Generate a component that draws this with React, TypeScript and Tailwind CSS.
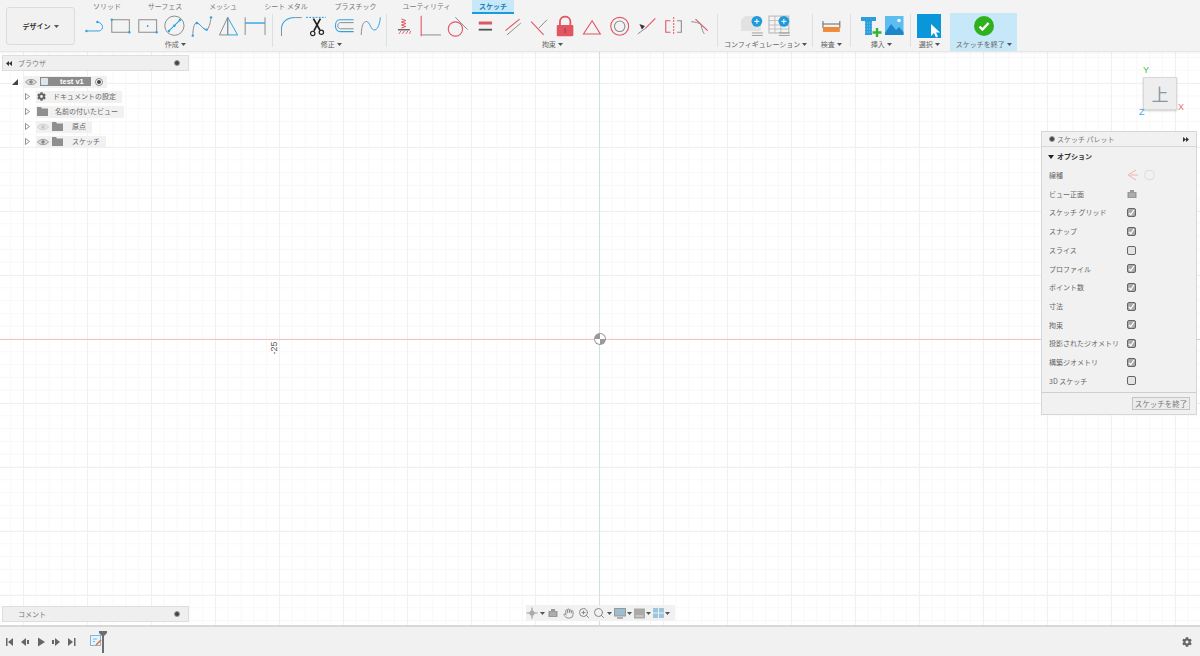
import type { ReactNode } from "react";
import { Hand, Search, ZoomIn } from "lucide-react";
import { FaCog } from "react-icons/fa";

const BLUE = "#2ea3e0";
const GRAY = "#8c8c8c";
const RED = "#e25563";

const Dot = ({ x, y }: { x: number; y: number }) => <circle cx={x} cy={y} r="1.2" fill={BLUE} />;

const createIcons: ReactNode[] = [
  <>
    <path d="M4.5 18H17.5C22 17 22 10 15.5 9" fill="none" stroke={BLUE} strokeWidth="1" />
    <Dot x={4.5} y={18} /><Dot x={15.5} y={9} />
  </>,
  <>
    <rect x="3.8" y="6.7" width="17.7" height="12.6" fill="none" stroke={GRAY} strokeWidth="1" />
    <Dot x={3.8} y={6.7} /><Dot x={21.5} y={19.3} />
  </>,
  <>
    <rect x="3.8" y="6.7" width="18" height="12.6" fill="none" stroke={GRAY} strokeWidth="1" />
    <circle cx="12.8" cy="13" r="0.9" fill={BLUE} /><Dot x={21.8} y={19.3} />
  </>,
  <>
    <circle cx="12.5" cy="12.7" r="9.7" fill="none" stroke={GRAY} strokeWidth="1" />
    <path d="M7 18L18 7" stroke={BLUE} strokeWidth="1.1" />
    <Dot x={7} y={18} /><Dot x={18} y={7} /><Dot x={12.5} y={12.7} />
  </>,
  <>
    <path d="M3.8 22.7C4 16 5 10 7.8 10C11 10 14 17 17.8 16.7C20 16 21.5 10 22.2 4.3" fill="none" stroke={GRAY} strokeWidth="1" />
    <path d="M7.8 10C11 10 14 17 17.8 16.7" fill="none" stroke={BLUE} strokeWidth="1" />
    <Dot x={3.8} y={22.7} /><Dot x={7.8} y={10} /><Dot x={17.8} y={16.7} /><Dot x={22.2} y={4.3} />
  </>,
  <>
    <path d="M12.8 4.3L4.5 22H12.8" fill="none" stroke={GRAY} strokeWidth="1" />
    <path d="M12.8 4.3L22.8 22H12.8Z" fill="none" stroke={BLUE} strokeWidth="1" />
    <path d="M12.8 4.3V22" stroke={GRAY} strokeWidth="1" />
  </>,
  <>
    <path d="M3.2 4.3V22M23.2 4.3V22" stroke={GRAY} strokeWidth="1" />
    <path d="M3.2 10H23.2" stroke={BLUE} strokeWidth="1.4" />
  </>,
];

const modifyIcons: ReactNode[] = [
  <>
    <path d="M3.5 23V16M17.5 4.5H24" stroke={GRAY} strokeWidth="1" fill="none" />
    <path d="M3.5 16C3.5 9 9 4.5 17.5 4.5" stroke={BLUE} strokeWidth="1.1" fill="none" />
  </>,
  <>
    <path d="M2 4.3H22" stroke={BLUE} strokeWidth="1" strokeDasharray="2 1.2" />
    <path d="M9.5 5.5L16 17M16.5 5.5L10 18" stroke="#222" strokeWidth="1.7" />
    <circle cx="8.8" cy="20.5" r="2.2" fill="none" stroke="#222" strokeWidth="1.2" />
    <circle cx="17.5" cy="19.3" r="2.2" fill="none" stroke="#222" strokeWidth="1.2" />
  </>,
  <>
    <path d="M22.8 6.7H9C3 6.7 3 18.7 9 18.7H22.8" fill="none" stroke={BLUE} strokeWidth="1.1" />
    <path d="M22.8 9.6H9.5C6 9.6 6 15.8 9.5 15.8H22.8" fill="none" stroke={GRAY} strokeWidth="1" />
  </>,
  <>
    <path d="M3.2 22C3.6 12 5.5 8.5 8.5 8.5" fill="none" stroke={GRAY} strokeWidth="1" />
    <path d="M8.5 8.5C12 8.5 13 18 17 17C20.5 16 22 10 22.5 4.3" fill="none" stroke={BLUE} strokeWidth="1" />
  </>,
];

const constraintIcons: ReactNode[] = [
  <>
    <path d="M9.5 6L14 7.5L9.5 9L14 10.5L9.5 12L14 13.5L9.5 15" fill="none" stroke={RED} strokeWidth="1" />
    <path d="M6 16.8H18" stroke="#555" strokeWidth="1.3" />
    <path d="M7 21L9 18M10.5 21L12.5 18M14 21L16 18M17.5 21L19 18" stroke={RED} strokeWidth="0.9" />
  </>,
  <>
    <path d="M3.2 22H23.2" stroke={GRAY} strokeWidth="1" />
    <path d="M3.2 2.7V23.3" stroke={RED} strokeWidth="1.1" />
  </>,
  <>
    <path d="M10.5 4.3L22.8 16.7" stroke={GRAY} strokeWidth="1" />
    <circle cx="10.5" cy="16" r="7.2" fill="none" stroke={RED} strokeWidth="1.1" />
  </>,
  <>
    <rect x="6.8" y="8.5" width="13.4" height="3" fill={RED} />
    <rect x="6.8" y="15.8" width="13.4" height="1.8" fill="#555" />
  </>,
  <>
    <path d="M6.5 17.7L20.8 6" stroke={RED} strokeWidth="1.1" />
    <path d="M8 22L22 10" stroke={GRAY} strokeWidth="1" />
  </>,
  <>
    <path d="M5.2 8.7L17.8 22" stroke={RED} strokeWidth="1.1" />
    <path d="M12.8 15.3L21.2 6.7" stroke={GRAY} strokeWidth="1" />
  </>,
  <>
    <path d="M8 12V8.5C8 2 18.5 2 18.5 8.5V12" fill="none" stroke={RED} strokeWidth="1.8" />
    <rect x="4.8" y="12" width="16.7" height="11.3" rx="1" fill={RED} />
    <path d="M13.2 15V20" stroke="#a83341" strokeWidth="1" />
  </>,
  <path d="M13.2 7.7L4.5 21H21.5Z" fill="none" stroke={RED} strokeWidth="1.1" />,
  <>
    <circle cx="13.8" cy="13.3" r="9" fill="none" stroke={RED} strokeWidth="1.1" />
    <circle cx="13.8" cy="13.3" r="5.3" fill="none" stroke={GRAY} strokeWidth="1.1" />
  </>,
  <>
    <path d="M22.5 5.3L12.5 15.3" stroke={RED} strokeWidth="1.1" />
    <path d="M12.5 15.3L4.8 21" stroke={GRAY} strokeWidth="1" />
    <path d="M6.5 11L12 13L9 16.5Z" fill="#333" />
  </>,
  <>
    <path d="M13.8 4V21" stroke={RED} strokeWidth="1" strokeDasharray="2 1" />
    <path d="M10.5 7.7H5.8V19.3H10.5" fill="none" stroke={RED} strokeWidth="1.1" />
    <path d="M17.2 7.7H21.5V19.3H17.2" fill="none" stroke={GRAY} strokeWidth="1.1" />
  </>,
  <>
    <path d="M9.5 6L21.8 17.7" stroke={RED} strokeWidth="1.1" />
    <path d="M5.2 8.7C10 9 15 10 15.5 13C16 16 17 19 18.5 21" fill="none" stroke={GRAY} strokeWidth="1" />
  </>,
];

const PlusBadge = ({ x }: { x: number }) => (
  <>
    <circle cx={x} cy="8.3" r="5.4" fill="#1d9bdc" />
    <path d={`M${x - 2.5} 8.3H${x + 2.5}M${x} 5.8V10.8`} stroke="#fff" strokeWidth="1" />
  </>
);

const configIcons: ReactNode[] = [
  <>
    <path d="M6 3H22V18H2V7Z" fill="#e2e2e2" />
    <path d="M13 20H24M13 22.5H24" stroke={GRAY} strokeWidth="0.8" />
    <PlusBadge x={18} />
  </>,
  <>
    <rect x="3" y="3" width="20" height="17" fill="#f4f4f4" stroke="#b5b5b5" />
    <path d="M3 7.5H23M3 12H23M3 16H23M9 3V20M15 3V20" stroke="#b5b5b5" strokeWidth="0.8" />
    <path d="M13 20H24M13 22.5H24" stroke={GRAY} strokeWidth="0.8" />
    <PlusBadge x={18} />
  </>,
];

const inspectIcons: ReactNode[] = [
  <>
    <path d="M5 8V15M22 8V15" stroke="#666" strokeWidth="1" />
    <path d="M5 11H22" stroke="#666" strokeWidth="1" />
    <rect x="5" y="14" width="17" height="5" fill="#ee8a3c" />
  </>,
];

const insertIcons: ReactNode[] = [
  <svg key="a" width="27" height="24" viewBox="0 1 27 24">
    <path d="M4 4H19V8H15V22H8V8H4Z" fill="#2b9edb" />
    <path d="M8 10H15M8 13H15M8 16H15M8 19H15" stroke="#9fd4ef" strokeWidth="0.7" strokeDasharray="1 1" />
    <path d="M20 15V24M15.5 19.5H24.5" stroke="#35b52f" strokeWidth="2.4" />
  </svg>,
  <svg key="b" width="21" height="24" viewBox="0 1 21 24">
    <rect x="1" y="3" width="18.5" height="19" fill="#5cbdf0" />
    <path d="M1 20L7 11L12 17L15 14L19.5 19V22H1Z" fill="#1b87c9" />
    <circle cx="15" cy="7.5" r="1.8" fill="#fff" />
  </svg>,
];

const RibbonIcon = ({ children }: { children: ReactNode }) => (
  <svg width="26.8" height="24" viewBox="0 1 27 24" className="shrink-0">{children}</svg>
);

const Caret = ({ className = "" }: { className?: string }) => (
  <svg width="5" height="3" viewBox="0 0 5 3" className={`inline-block align-middle ${className}`}>
    <path d="M0 0H5L2.5 3Z" fill="#555" />
  </svg>
);

const RibbonLabel = ({ text }: { text: string }) => (
  <div className="h-[12px] flex items-center justify-center gap-[2px] text-[7px] leading-[12px] text-[#666] whitespace-nowrap">
    {text}<Caret />
  </div>
);

const Group = ({ label, icons, className }: { label: string; icons: ReactNode[]; className: string }) => (
  <div className={`flex flex-col items-center ${className}`}>
    <div className="flex h-[24px]">
      {icons.map((icon, i) => <RibbonIcon key={i}>{icon}</RibbonIcon>)}
    </div>
    <RibbonLabel text={label} />
  </div>
);

const Sep = ({ className }: { className: string }) => <div className={`w-px h-[33px] bg-[#dfdfdf] shrink-0 ${className}`} />;

const tabs = [
  { label: "ソリッド", cls: "w-[56px]" },
  { label: "サーフェス", cls: "w-[60px]" },
  { label: "メッシュ", cls: "w-[56px]" },
  { label: "シート メタル", cls: "w-[70px]" },
  { label: "プラスチック", cls: "w-[69px]" },
  { label: "ユーティリティ", cls: "w-[73px]" },
];

function Toolbar() {
  return (
    <header className="h-[52px] shrink-0 flex bg-[#f3f3f3] border-b border-[#e6e6e6] shadow-[0_1px_2px_rgba(0,0,0,0.06)] pl-[6px] relative z-10">
      <button className="mt-[7px] w-[69px] h-[38px] shrink-0 rounded-[3px] border border-[#dcdcdc] bg-[#f1f1f1] flex items-center justify-center gap-[3px] text-[7px] font-bold text-[#333]">
        デザイン<Caret />
      </button>
      <div className="flex flex-col">
        <nav className="h-[15px] flex ml-[4px] text-[7px] text-[#777]">
          {tabs.map((t) => (
            <div key={t.label} className={`${t.cls} h-[13px] flex items-center justify-center whitespace-nowrap`}>{t.label}</div>
          ))}
          <div className="ml-[9px] w-[42px] bg-[#c6e8f8] border-b-2 border-[#1a9bdc] flex items-center justify-center font-bold text-[#1b7fb8]">スケッチ</div>
        </nav>
        <div className="flex ml-[6.5px]">
          <Group label="作成" icons={createIcons} className="w-[187.6px]" />
          <Sep className="ml-[3px] mr-[4.5px]" />
          <Group label="修正" icons={modifyIcons} className="w-[107.2px]" />
          <Sep className="ml-[1.3px] mr-[4.5px]" />
          <Group label="拘束" icons={constraintIcons} className="w-[321.6px]" />
          <Sep className="ml-[4px] mr-[7px]" />
          <Group label="コンフィギュレーション" icons={configIcons} className="w-[81px]" />
          <Sep className="ml-[6px] mr-[4.6px]" />
          <Group label="検査" icons={inspectIcons} className="w-[26.8px]" />
          <Sep className="ml-[5.6px] mr-[3px]" />
          <div className="w-[54px] flex flex-col items-center">
            <div className="flex h-[24px] w-full justify-center">{insertIcons}</div>
            <RibbonLabel text="挿入" />
          </div>
          <Sep className="ml-[2px] mr-[3px]" />
          <div className="w-[30px] flex flex-col items-center">
            <div className="w-[24px] h-[24px] bg-[#0a97d9] flex items-end justify-end">
              <svg width="12" height="15" viewBox="0 0 12 15"><path d="M2 1V13L5 10L7 14.5L9 13.5L7 9.5H11Z" fill="#fff" /></svg>
            </div>
            <RibbonLabel text="選択" />
          </div>
          <div className="ml-[6px] w-[67px] h-[38px] -mt-px bg-[#c6e8f8] flex flex-col items-center">
            <svg width="24" height="24" viewBox="0 0 24 24" className="mt-px">
              <circle cx="12" cy="12" r="10" fill="#2fb11e" />
              <path d="M7.5 12.5L10.5 15.5L16.5 9" fill="none" stroke="#fff" strokeWidth="2.4" />
            </svg>
            <RibbonLabel text="スケッチを終了" />
          </div>
        </div>
      </div>
    </header>
  );
}

const Eye = ({ faded = false }: { faded?: boolean }) => (
  <svg width="12" height="8" viewBox="0 0 12 8" className={faded ? "opacity-40" : ""}>
    <path d="M0.5 4C3 0.5 9 0.5 11.5 4C9 7.5 3 7.5 0.5 4Z" fill="#ddd" stroke="#888" strokeWidth="0.8" />
    <circle cx="6" cy="4" r="1.8" fill="#888" />
  </svg>
);

const Folder = () => (
  <svg width="11" height="9" viewBox="0 0 11 9"><path d="M0 0H4L5 1.5H11V9H0Z" fill="#8f8f8f" /></svg>
);

const Expand = () => (
  <svg width="5" height="7" viewBox="0 0 5 7" className="shrink-0"><path d="M0.5 0.5L4.5 3.5L0.5 6.5Z" fill="#fff" stroke="#777" strokeWidth="0.8" /></svg>
);

const PanelDot = () => <span className="w-[6px] h-[6px] rounded-full bg-[#444] border border-[#999] block shrink-0" />;

const treeRows = [
  { label: "ドキュメントの設定", gear: true },
  { label: "名前の付いたビュー" },
  { label: "原点", eye: "faded", wide: true },
  { label: "スケッチ", eye: "on", wide: true },
];

function Browser() {
  return (
    <aside className="absolute left-[2px] top-[3px] w-[187px]">
      <div className="h-[16px] bg-[#efefef] border border-[#dedede] flex items-center px-[3px] text-[7px] text-[#777]">
        <svg width="6" height="5" viewBox="0 0 6 5"><path d="M3 0V5L0 2.5ZM6 0V5L3 2.5Z" fill="#333" /></svg>
        <span className="ml-[6px] flex-1">ブラウザ</span>
        <span className="mr-[5px]"><PanelDot /></span>
      </div>
      <div className="mt-[3px] pl-[10px] text-[7px] text-[#666]">
        <div className="h-[15px] flex items-center">
          <svg width="6" height="6" viewBox="0 0 6 6" className="mr-[6px]"><path d="M6 0V6H0Z" fill="#444" /></svg>
          <div className="h-[12px] w-[83px] bg-[#f1f1f1] flex items-center pl-[1px]">
            <Eye />
            <div className="ml-[3px] w-[51px] h-[9px] bg-[#8c8c8c] flex items-center text-white font-bold">
              <span className="ml-[1px] w-[7px] h-[7px] bg-[#dce6ee] rounded-[1px]" />
              <span className="ml-[12px] text-[7.5px] font-['Liberation_Sans',sans-serif]">test v1</span>
            </div>
            <span className="ml-[4px] w-[8px] h-[8px] rounded-full border border-[#888] bg-white flex items-center justify-center">
              <span className="w-[4px] h-[4px] rounded-full bg-[#444]" />
            </span>
          </div>
        </div>
        {treeRows.map((row) => (
          <div key={row.label} className="h-[15px] flex items-center pl-[13px]">
            <Expand />
            <div className="ml-[6px] h-[12px] bg-[#f1f1f1] flex items-center pl-[1px] pr-[6px]">
              {row.gear && <FaCog size={9} color="#666" />}
              {row.eye && <Eye faded={row.eye === "faded"} />}
              {row.wide ? <span className="ml-[3px]"><Folder /></span> : !row.gear && <Folder />}
              <span className={row.wide ? "ml-[9px]" : row.gear ? "ml-[7px]" : "ml-[7px]"}>{row.label}</span>
            </div>
          </div>
        ))}
      </div>
    </aside>
  );
}

const paletteRows = [
  { label: "スケッチ グリッド", on: true },
  { label: "スナップ", on: true },
  { label: "スライス", on: false },
  { label: "プロファイル", on: true },
  { label: "ポイント数", on: true },
  { label: "寸法", on: true },
  { label: "拘束", on: true },
  { label: "投影されたジオメトリ", on: true },
  { label: "構築ジオメトリ", on: true },
  { label: "3D スケッチ", on: false },
];

const CameraGlyph = () => (
  <svg width="10" height="10" viewBox="0 0 10 10">
    <path d="M3 1H7V3H9.5V9H0.5V3H3Z" fill="#999" />
    <path d="M2 5H8M2 7H8" stroke="#ccc" strokeWidth="0.8" />
  </svg>
);

const PaletteCheck = ({ on }: { on: boolean }) => (
  <span className={`w-[9px] h-[9px] rounded-[2px] border border-[#666] flex items-center justify-center ${on ? "bg-[#a9a9a9]" : "bg-[#e4e4e4]"}`}>
    {on && (
      <svg width="7" height="7" viewBox="0 0 7 7"><path d="M1 4L2.8 5.8L6 1" fill="none" stroke="#fff" strokeWidth="1.3" /></svg>
    )}
  </span>
);

function Palette() {
  return (
    <aside className="absolute left-[1041px] top-[79px] w-[156px] h-[284px] bg-[#f1f1f1] border border-[#d6d6d6] text-[7px] text-[#666] flex flex-col">
      <div className="h-[15px] border-b border-[#d6d6d6] flex items-center px-[7px] text-[#777]">
        <PanelDot />
        <span className="ml-[2px] flex-1">スケッチ パレット</span>
        <svg width="6" height="5" viewBox="0 0 6 5"><path d="M0 0V5L3 2.5ZM3 0V5L6 2.5Z" fill="#333" /></svg>
      </div>
      <div className="h-[19px] flex items-center px-[6px] font-bold text-[#333]">
        <svg width="6" height="4" viewBox="0 0 6 4"><path d="M0 0H6L3 4Z" fill="#222" /></svg>
        <span className="ml-[3px]">オプション</span>
      </div>
      <div className="h-[18.7px] flex items-center pl-[7px]">
        <span className="w-[78px]">線種</span>
        <svg width="30" height="12" viewBox="0 0 30 12">
          <path d="M9 1L1 6L9 11M3 6H11" fill="none" stroke="#efb4b4" strokeWidth="1" />
          <rect x="18" y="1.5" width="9" height="9" rx="3" fill="none" stroke="#ddd" strokeWidth="1" />
        </svg>
      </div>
      <div className="h-[18.7px] flex items-center pl-[7px]">
        <span className="w-[78px]">ビュー正面</span>
        <CameraGlyph />
      </div>
      {paletteRows.map((row) => (
        <div key={row.label} className="h-[18.7px] flex items-center pl-[7px]">
          <span className="w-[78px] whitespace-nowrap">{row.label}</span>
          <PaletteCheck on={row.on} />
        </div>
      ))}
      <div className="mt-auto h-[22px] border-t border-[#cfcfcf] flex items-center justify-end pr-[6px]">
        <button className="w-[58px] h-[13px] border border-[#c4c4c4] bg-[#ececec] text-[7.5px] leading-none text-[#777]">スケッチを終了</button>
      </div>
    </aside>
  );
}

function ViewCube() {
  return (
    <div className="absolute left-[1139px] top-[14px] w-[46px] h-[54px] font-['Liberation_Sans',sans-serif] text-[9px]">
      <span className="absolute left-[4px] top-0 text-[#39c23a] leading-none">Y</span>
      <div className="absolute left-[4px] top-[11px] w-[34px] h-[33px] bg-[#eeeeee] border border-[#d8d8d8] shadow-[0_1px_2px_rgba(0,0,0,0.2)] flex items-center justify-center text-[17px] leading-none text-[#8a96a0] font-['Noto_Sans_CJK_JP',sans-serif]">上</div>
      <span className="absolute left-[39px] top-[37px] text-[#ee6b6b] leading-none">X</span>
      <span className="absolute left-0 top-[42px] text-[#45a8ea] leading-none">Z</span>
    </div>
  );
}

function NavBar() {
  return (
    <div className="absolute left-[526px] top-[553px] h-[16px] w-[149px] bg-[#f1f1f1] flex items-center text-[#888]">
      <svg width="12" height="12" viewBox="0 0 12 12">
        <path d="M6 0.5V11.5M0.5 6H11.5" stroke="#999" strokeWidth="1.2" />
        <circle cx="6" cy="6" r="2.6" fill="#aaa" />
      </svg>
      <Caret className="ml-[2px]" />
      <span className="ml-[3px]"><CameraGlyph /></span>
      <Hand size={11} className="ml-[5px]" />
      <ZoomIn size={12} className="ml-[4px]" />
      <Search size={12} className="ml-[3px]" />
      <Caret className="ml-[2px]" />
      <svg width="12" height="11" viewBox="0 0 12 11" className="ml-[2px]">
        <rect x="0.5" y="0.5" width="11" height="7.5" fill="#9dbdd4" stroke="#999" />
        <path d="M3 10H9" stroke="#999" strokeWidth="1.5" />
      </svg>
      <Caret className="ml-px" />
      <svg width="11" height="11" viewBox="0 0 11 11" className="ml-[2px]"><rect width="11" height="10" y="0.5" fill="#aaa" /><rect x="1.5" y="7" width="8" height="2" fill="#c4c4c4" /></svg>
      <Caret className="ml-px" />
      <svg width="11" height="10" viewBox="0 0 11 10" className="ml-[2px]">
        <rect width="11" height="10" fill="#9cc4df" />
        <path d="M5.5 0V10M0 5H11" stroke="#eee" strokeWidth="1" />
      </svg>
      <Caret className="ml-px" />
    </div>
  );
}

const Timeline = () => (
  <footer className="h-[31px] shrink-0 bg-[#f1f1f1] border-t-2 border-[#d8d8d8] flex items-center pl-[6px] pr-[8px] relative">
    <svg width="72" height="10" viewBox="0 0 72 10" fill="#666">
      <path d="M0 1H1.5V9H0ZM7 1V9L2 5Z" />
      <path d="M20 1V9L15 5ZM21 3H23V7H21Z" />
      <path d="M32 0.5V9.5L39 5Z" />
      <path d="M46 3H48V7H46ZM49 1V9L54 5Z" />
      <path d="M62 1V9L67 5ZM68 1H69.5V9H68Z" />
    </svg>
    <svg width="12" height="12" viewBox="0 0 12 12" className="ml-[12px] mb-[2px]">
      <rect x="0.5" y="0.5" width="10" height="10" fill="#e7f2fa" stroke="#7db8de" />
      <path d="M3 4H7M3 6.5H5" stroke="#7db8de" />
      <path d="M6 10L11 5" stroke="#e8743b" strokeWidth="1.6" />
    </svg>
    <svg width="8" height="22" viewBox="0 0 8 22" className="ml-[-3px]">
      <path d="M0 0H8V2L5 5V22H3V5L0 2Z" fill="#6e6e6e" />
    </svg>
    <FaCog size={10} color="#666" className="ml-auto" />
  </footer>
);

export default function App() {
  return (
    <div className="w-[1200px] h-[656px] overflow-hidden flex flex-col bg-white font-['Noto_Sans_CJK_JP','Noto_Sans',sans-serif]">
      <Toolbar />
      <main className="flex-1 relative bg-white bg-[linear-gradient(to_right,#f0f0f0_1px,transparent_1px),linear-gradient(to_bottom,#f0f0f0_1px,transparent_1px),linear-gradient(to_right,#f8f8f8_1px,transparent_1px),linear-gradient(to_bottom,#f8f8f8_1px,transparent_1px)] bg-[size:64px_64px,64px_64px,12.8px_12.8px,12.8px_12.8px] bg-[position:23px_31px,23px_31px,10.2px_5px,10.2px_5px]">
        {/* sketch axes */}
        <div className="absolute left-0 right-0 top-[287px] h-px bg-[#f5c0c0]" />
        <div className="absolute top-0 bottom-0 left-[599px] w-px bg-[#cfe3da]" />
        <span className="absolute left-[267px] top-[290px] -rotate-90 text-[9px] leading-[12px] text-[#555] font-['Liberation_Sans',sans-serif]">-25</span>
        <svg width="14" height="14" viewBox="0 0 14 14" className="absolute left-[593px] top-[280px]">
          <circle cx="7" cy="7" r="6" fill="#9a9a9a" />
          <path d="M7 7V2A5 5 0 0 1 12 7ZM7 7V12A5 5 0 0 1 2 7Z" fill="#fff" />
        </svg>
        <Browser />
        <ViewCube />
        <Palette />
        <NavBar />
        <aside className="absolute left-[2px] top-[554px] w-[187px] h-[16px] bg-[#efefef] border border-[#dedede] flex items-center pl-[15px] pr-[8px] text-[7px] text-[#777]">
          <span className="flex-1">コメント</span>
          <PanelDot />
        </aside>
      </main>
      <Timeline />
    </div>
  );
}
